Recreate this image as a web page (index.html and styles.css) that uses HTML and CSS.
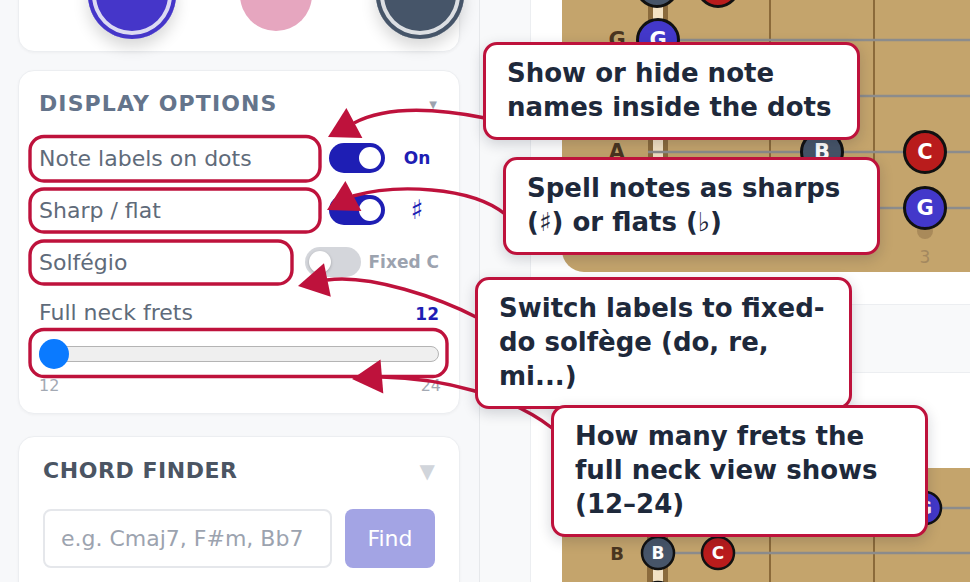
FILE: index.html
```html
<!DOCTYPE html>
<html lang="en">
<head>
    <meta charset="UTF-8">
    <meta name="viewport" content="width=device-width, initial-scale=1.0">
    <title>Fretboard - Display options</title>
    <link rel="stylesheet" href="styles.css">
</head>
<body>
    <div class="app">
        <aside class="sidebar">
            <section class="card legend">
                <div class="legend-row">
                    <span class="chip chip-fifth">5</span>
                    <span class="chip chip-third">A</span>
                    <span class="chip chip-seventh">7</span>
                </div>
            </section>

            <section class="card options">
                <div class="card-head">
                    <h2 class="card-title">Display options</h2>
                    <span class="caret caret-small">▼</span>
                </div>
                <div class="opt-row">
                    <span class="opt-label">Note labels on dots</span>
                    <span class="switch is-on"><span class="knob"></span></span>
                    <span class="opt-value">On</span>
                </div>
                <div class="opt-row">
                    <span class="opt-label">Sharp / flat</span>
                    <span class="switch is-on"><span class="knob"></span></span>
                    <span class="opt-value is-symbol">♯</span>
                </div>
                <div class="opt-row">
                    <span class="opt-label">Solfégio</span>
                    <span class="switch"><span class="knob"></span></span>
                    <span class="opt-value is-muted">Fixed C</span>
                </div>
                <div class="range-head">
                    <span>Full neck frets</span>
                    <span class="range-value">12</span>
                </div>
                <div class="range"><span class="range-thumb"></span></div>
                <div class="range-scale"><span>12</span><span>24</span></div>
            </section>

            <section class="card finder">
                <div class="card-head">
                    <h2 class="card-title">Chord finder</h2>
                    <span class="caret caret-big">▼</span>
                </div>
                <div class="finder-row">
                    <input class="finder-input" type="text" placeholder="e.g. Cmaj7, F#m, Bb7">
                    <button class="finder-btn">Find</button>
                </div>
            </section>
        </aside>

        <main class="stage">
            <section class="panel panel-top">
                <svg class="neck" width="420" height="272" viewBox="562 0 420 272">
                    <rect class="wood" x="562" y="-80" width="480" height="352" rx="22"/>
                    <g class="frets">
                        <line x1="770" y1="-80" x2="770" y2="222"/>
                        <line x1="874" y1="-80" x2="874" y2="222"/>
                        <line x1="978" y1="-80" x2="978" y2="222"/>
                    </g>
                    <rect class="nut" x="648" y="-80" width="20" height="302"/>
                    <rect class="nut-bone" x="653" y="-80" width="10" height="302"/>
                    <g class="strings">
                        <line x1="648" y1="-16" x2="982" y2="-16"/>
                        <line x1="648" y1="40" x2="982" y2="40"/>
                        <line x1="648" y1="96" x2="982" y2="96"/>
                        <line x1="648" y1="152" x2="982" y2="152"/>
                        <line x1="648" y1="208" x2="982" y2="208"/>
                    </g>
                    <g class="string-name">
                        <text x="617" y="40">G</text>
                        <text x="617" y="152">A</text>
                    </g>
                    <circle class="fret-mark" cx="925" cy="231" r="8"/>
                    <text class="fret-num" x="925" y="263">3</text>
                    <g class="dot dot-b"><circle cx="657" cy="-14" r="20.5"/></g>
                    <g class="dot dot-c"><circle cx="718" cy="-14" r="20.5"/></g>
                    <g class="dot dot-g"><circle cx="658" cy="40" r="20.5"/><text x="658" y="40">G</text></g>
                    <g class="dot dot-b"><circle cx="822" cy="152" r="20.5"/><text x="822" y="152">B</text></g>
                    <g class="dot dot-c"><circle cx="925" cy="152" r="20.5"/><text x="925" y="152">C</text></g>
                    <g class="dot dot-g"><circle cx="925" cy="208" r="20.5"/><text x="925" y="208">G</text></g>
                </svg>
            </section>

            <section class="panel panel-full">
                <svg class="neck neck-small" width="420" height="140" viewBox="562 468 420 140">
                    <rect class="wood" x="562" y="468" width="480" height="300" rx="22"/>
                    <g class="frets">
                        <line x1="770" y1="468" x2="770" y2="620"/>
                        <line x1="874" y1="468" x2="874" y2="620"/>
                        <line x1="978" y1="468" x2="978" y2="620"/>
                    </g>
                    <rect class="nut" x="647" y="488" width="21" height="140"/>
                    <rect class="nut-bone" x="653" y="488" width="10" height="140"/>
                    <g class="strings">
                        <line x1="647" y1="508" x2="982" y2="508"/>
                        <line x1="647" y1="553" x2="982" y2="553"/>
                        <line x1="647" y1="598" x2="982" y2="598"/>
                    </g>
                    <g class="string-name">
                        <text x="617" y="553">B</text>
                    </g>
                    <g class="dot dot-g"><circle cx="925" cy="508" r="16"/><text x="925" y="508">G</text></g>
                    <g class="dot dot-b"><circle cx="658" cy="553" r="16"/><text x="658" y="553">B</text></g>
                    <g class="dot dot-c"><circle cx="718" cy="553" r="16"/><text x="718" y="553">C</text></g>
                    <g class="dot dot-g"><circle cx="658" cy="598" r="16"/></g>
                </svg>
            </section>
        </main>
    </div>

    <svg class="marks" width="970" height="582" viewBox="0 0 970 582">
        <g class="marks-line">
            <rect x="30" y="136.5" width="290" height="44.5" rx="14"/>
            <rect x="30" y="189" width="290" height="43" rx="14"/>
            <rect x="30" y="241" width="262" height="43" rx="14"/>
            <rect x="30" y="329.5" width="417" height="47" rx="14"/>
            <path d="M485 118 C445 110 390 104 354 123"/>
            <path d="M505 214 C470 186 395 184 353 196"/>
            <path d="M478 318 C440 298 370 274 327 280"/>
            <path d="M552 428 C510 395 440 378 382 377"/>
        </g>
        <g class="marks-head">
            <polygon points="328,137 346.4,107.9 362.4,137.9"/>
            <polygon points="327,210 345.4,180.9 361.4,210.9"/>
            <polygon points="298,286 324,263.3 330.8,296.7"/>
            <polygon points="352,379 380.5,359.6 383.3,393.6"/>
        </g>
    </svg>

    <div class="callout callout-labels">Show or hide note names inside the dots</div>
    <div class="callout callout-spelling">Spell notes as sharps (♯) or flats (♭)</div>
    <div class="callout callout-solfege">Switch labels to fixed-do solfège (do, re, mi...)</div>
    <div class="callout callout-frets">How many frets the full neck view shows (12–24)</div>
</body>
</html>
```

FILE: styles.css
```css
* {
    margin: 0;
    padding: 0;
    box-sizing: border-box;
}

body {
    font-family: "DejaVu Sans", sans-serif;
    color: #333;
    background-color: #f7f8fa;
    width: 970px;
    height: 582px;
    overflow: hidden;
    position: relative;
}

.app {
    display: flex;
    height: 582px;
}

/* sidebar */

.sidebar {
    width: 480px;
    flex: none;
    padding: 0 19px 0 18px;
    border-right: 1px solid #e6e8eb;
    background-color: #f7f8fa;
}

.card {
    background: #fff;
    border: 1px solid #eceef1;
    border-radius: 16px;
    box-shadow: 0 1px 3px rgba(0, 0, 0, 0.04);
}

.legend {
    margin-top: -60px;
    height: 112px;
    padding: 10px 0 0 69px;
}

.legend-row {
    display: flex;
    align-items: center;
    gap: 64px;
}

.chip {
    width: 88px;
    height: 88px;
    flex: none;
    border-radius: 50%;
    display: flex;
    align-items: center;
    justify-content: center;
    padding-bottom: 14px;
    color: #fff;
    font-family: "Liberation Serif", serif;
    font-weight: bold;
    font-size: 34px;
}

.chip-fifth {
    background: #4536c9;
    box-shadow: inset 0 0 0 4px #4536c9, inset 0 0 0 8px #dcdaf2, 0 8px 16px rgba(0, 0, 0, 0.16);
}

.chip-third {
    width: 72px;
    height: 72px;
    background: #e6a6bf;
}

.chip-seventh {
    background: #465569;
    box-shadow: inset 0 0 0 4px #465569, inset 0 0 0 8px #dcdfe3, 0 8px 16px rgba(0, 0, 0, 0.16);
}

.options {
    margin-top: 18px;
    padding: 20px 20px 18px;
}

.card-head {
    display: flex;
    justify-content: space-between;
    align-items: center;
    height: 26px;
}

.card-title {
    font-size: 22px;
    line-height: 26px;
    font-weight: bold;
    letter-spacing: 0.05em;
    text-transform: uppercase;
    color: #64748b;
}

.caret-small {
    font-size: 10px;
    color: #9ca3af;
    margin-right: 2px;
}

.caret-big {
    font-size: 20px;
    color: #d1d5db;
}

.opt-row {
    display: flex;
    align-items: center;
    height: 30px;
    margin-top: 22px;
}

.card-head + .opt-row {
    margin-top: 26px;
}

.opt-label {
    flex: 1;
    font-size: 22px;
    color: #5f6b7a;
}

.switch {
    width: 56px;
    height: 30px;
    flex: none;
    display: flex;
    align-items: center;
    padding: 0 4px;
    border-radius: 15px;
    background: #d4d6db;
}

.switch.is-on {
    justify-content: flex-end;
    background: #1e1eb4;
}

.knob {
    width: 22px;
    height: 22px;
    border-radius: 50%;
    background: #fff;
    box-shadow: 0 1px 3px rgba(0, 0, 0, 0.25);
}

.switch.is-on .knob {
    box-shadow: none;
}

.opt-value {
    min-width: 44px;
    margin-left: 10px;
    text-align: center;
    font-size: 17px;
    font-weight: bold;
    color: #1e1eb4;
}

.opt-value.is-symbol {
    font-size: 27px;
    line-height: 30px;
    font-weight: normal;
}

.opt-value.is-muted {
    margin-left: 8px;
    color: #9ca3af;
}

.range-head {
    display: flex;
    justify-content: space-between;
    align-items: baseline;
    margin-top: 23px;
    font-size: 22px;
    line-height: 26px;
    color: #5f6b7a;
}

.range-value {
    font-size: 17px;
    font-weight: bold;
    color: #1e1eb4;
}

.range {
    height: 16px;
    margin-top: 19px;
    display: flex;
    align-items: center;
    border: 1.5px solid #b4b4b4;
    border-radius: 8px;
    background: #efefef;
}

.range-thumb {
    width: 30px;
    height: 30px;
    flex: none;
    margin-left: -1.5px;
    border-radius: 50%;
    background: #0a7aff;
}

.range-scale {
    display: flex;
    justify-content: space-between;
    margin: 15px -2px 0 0;
    font-size: 16px;
    line-height: 18px;
    color: #a3a9b3;
}

.finder {
    margin-top: 22px;
    height: 200px;
    padding: 21px 24px 0;
}

.finder .card-title {
    letter-spacing: 0.025em;
    color: #4b5563;
}

.finder-row {
    display: flex;
    gap: 13px;
    margin-top: 25px;
}

.finder-input {
    flex: 1;
    min-width: 0;
    height: 59px;
    padding: 0 16px;
    border: 2px solid #e5e7eb;
    border-radius: 8px;
    font-family: inherit;
    font-size: 22px;
    color: #333;
}

.finder-input::placeholder {
    color: #9ca3af;
}

.finder-btn {
    width: 90px;
    height: 59px;
    flex: none;
    border: none;
    border-radius: 8px;
    background: #a3a4e4;
    color: #fff;
    font-family: inherit;
    font-size: 22px;
}

/* main area with the necks */

.stage {
    flex: 1;
    min-width: 0;
    overflow: hidden;
    padding-left: 50px;
    background: #f8f9fa;
}

.panel {
    width: 600px;
    background: #fff;
    border: 1px solid #eceef1;
}

.panel-top {
    border-top: none;
    padding: 0 0 32px 31px;
}

.panel-full {
    margin-top: 67px;
    height: 300px;
    padding: 95px 0 0 31px;
}

.neck {
    display: block;
}

.wood {
    fill: #c4a46c;
}

.frets line {
    stroke: #8b6a3a;
    stroke-width: 2;
}

.nut {
    fill: #8b6b3d;
}

.nut-bone {
    fill: #f3e2c4;
}

.strings line {
    stroke: #8c8c8c;
    stroke-width: 2.5;
}

.string-name text {
    fill: #4a3520;
    font-size: 21px;
    font-weight: bold;
    text-anchor: middle;
    dominant-baseline: central;
}

.neck-small .string-name text {
    font-size: 18px;
}

.fret-mark {
    fill: #a98a5a;
}

.fret-num {
    fill: #a3885f;
    font-size: 17px;
    text-anchor: middle;
}

.dot circle {
    stroke: #111;
    stroke-width: 3;
}

.dot text {
    fill: #fff;
    font-size: 21px;
    font-weight: bold;
    text-anchor: middle;
    dominant-baseline: central;
}

.neck-small .dot circle {
    stroke-width: 2.5;
}

.neck-small .dot text {
    font-size: 17px;
}

.dot-b circle { fill: #475569; }
.dot-c circle { fill: #b91c1c; }
.dot-g circle { fill: #4338ca; }

/* annotation layer */

.marks {
    position: absolute;
    top: 0;
    left: 0;
}

.marks-line {
    fill: none;
    stroke: #be123c;
    stroke-width: 3.4;
}

.marks-head {
    fill: #be123c;
}

.callout {
    position: absolute;
    width: 377px;
    padding: 11px 20px 13px 21px;
    background: #fff;
    border: 3px solid #be123c;
    border-radius: 14px;
    box-shadow: 0 4px 14px rgba(15, 23, 42, 0.18);
    font-size: 26px;
    line-height: 34px;
    font-weight: bold;
    color: #1e293b;
}

.callout-labels {
    left: 483px;
    top: 42px;
}

.callout-spelling {
    left: 503px;
    top: 157px;
}

.callout-solfege {
    left: 475px;
    top: 277px;
}

.callout-frets {
    left: 551px;
    top: 405px;
}
```
